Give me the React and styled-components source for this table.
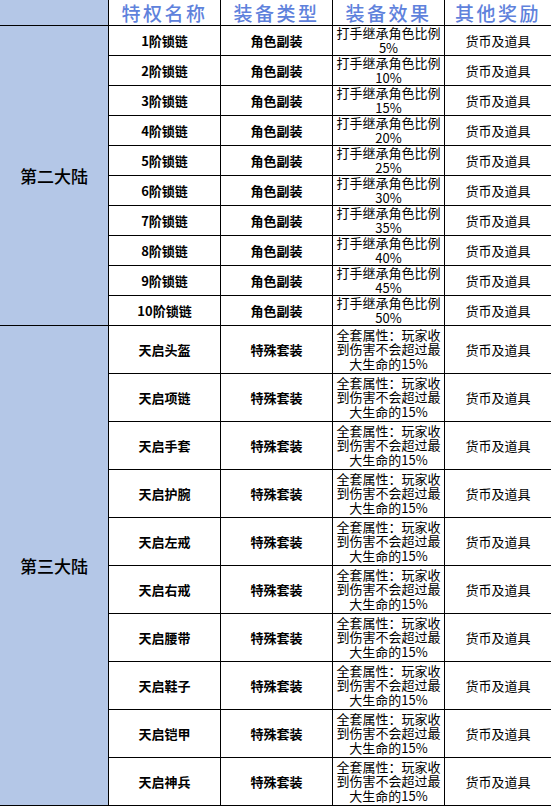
import React from 'react';
import styled, { createGlobalStyle } from 'styled-components';

const GlobalStyle = createGlobalStyle`
	body {
		margin: 0;
		background: #ffffff;
		font-family: "Noto Sans CJK SC", "Noto Sans", sans-serif;
	}
`;

const blue = '#b4c7e7';

const Sheet = styled.div`
	display: grid;
	grid-template-columns: 108px 111px 111px 111px 1fr;
	grid-template-rows: 25px repeat(10, 29px) repeat(10, 47px);
	gap: 1px;
	padding-bottom: 1px;
	width: 551px;
	background: #000000;
`;

const Cell = styled.div`
	display: flex;
	align-items: center;
	justify-content: center;
	text-align: center;
	overflow: hidden;
	background: #ffffff;
	color: #000000;
	font-size: 13px;
	line-height: 15px;
`;

const HeadCell = styled(Cell)`
	background: ${({ $blank }) => ($blank ? blue : '#ffffff')};
	color: #5f82dc;
	font-size: 19px;
	font-weight: 500;
	letter-spacing: 2.5px;
	line-height: 22px;
	overflow: visible;
`;

const RegionCell = styled(Cell)`
	grid-column: 1;
	grid-row: span ${({ $span }) => $span};
	background: ${blue};
	font-size: 17px;
	font-weight: 500;
	line-height: 22px;
`;

const BoldCell = styled(Cell)`
	font-weight: 700;
`;

const EffectCell = styled(Cell)`
	padding: 0 2px;
	line-height: 14.5px;
`;

const chain = Array.from({ length: 10 }, (_, i) => ({
	name: `${i + 1}阶锁链`,
	type: '角色副装',
	effect: `打手继承角色比例${(i + 1) * 5}%`,
}));

const suit = ['头盔', '项链', '手套', '护腕', '左戒', '右戒', '腰带', '鞋子', '铠甲', '神兵'].map((n) => ({
	name: `天启${n}`,
	type: '特殊套装',
	effect: '全套属性：玩家收到伤害不会超过最大生命的15%',
}));

const groups = [
	{ region: '第二大陆', rows: chain },
	{ region: '第三大陆', rows: suit },
];

const headers = ['特权名称', '装备类型', '装备效果', '其他奖励'];

export default function App() {
	return (
		<>
			<GlobalStyle />
			<Sheet>
				<HeadCell $blank />
				{headers.map((h) => (
					<HeadCell key={h}>{h}</HeadCell>
				))}
				{groups.map((g) => (
					<React.Fragment key={g.region}>
						<RegionCell $span={g.rows.length}>{g.region}</RegionCell>
						{g.rows.map((r) => (
							<React.Fragment key={r.name}>
								<BoldCell>{r.name}</BoldCell>
								<BoldCell>{r.type}</BoldCell>
								<EffectCell>{r.effect}</EffectCell>
								<Cell>货币及道具</Cell>
							</React.Fragment>
						))}
					</React.Fragment>
				))}
			</Sheet>
		</>
	);
}
